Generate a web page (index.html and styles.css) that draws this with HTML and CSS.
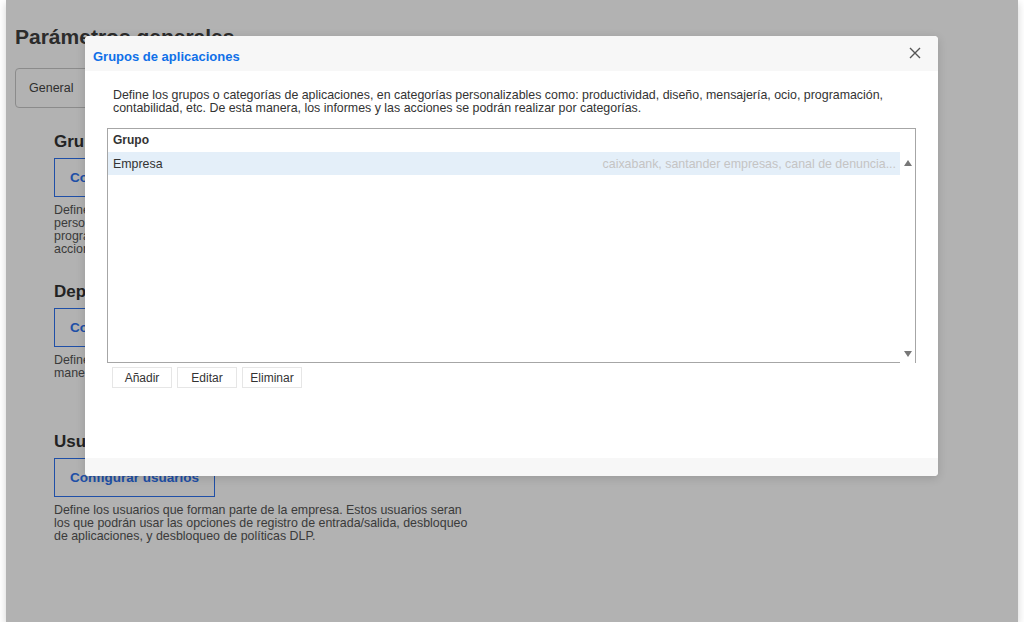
FILE: index.html
```html
<!DOCTYPE html>
<html lang="es">
<head>
    <meta charset="UTF-8">
    <meta name="viewport" content="width=device-width, initial-scale=1.0">
    <title>Parámetros generales</title>
    <link rel="stylesheet" href="styles.css">
</head>
<body>
    <div class="window">
        <div class="page">
            <h1>Parámetros generales</h1>

            <div class="tabs">
                <div class="tab">General</div>
            </div>

            <div class="sections">
                <div class="section">
                    <h2>Grupos de aplicaciones</h2>
                    <button class="config-btn">Configurar grupos de aplicaciones</button>
                    <p class="desc">Define los grupos o categorías de aplicaciones, en categorías personalizables como: productividad, diseño, mensajería, ocio, programación, contabilidad, etc. De esta manera, los informes y las acciones se podrán realizar por categorías.</p>
                </div>

                <div class="section">
                    <h2>Departamentos</h2>
                    <button class="config-btn">Configurar departamentos</button>
                    <p class="desc">Define los departamentos que forman parte de la organización. De esta<br>manera, los informes y las acciones se podrán realizar por departamentos.</p>
                </div>

                <div class="section">
                    <h2>Usuarios</h2>
                    <button class="config-btn">Configurar usuarios</button>
                    <p class="desc">Define los usuarios que forman parte de la empresa. Estos usuarios seran los que podrán usar las opciones de registro de entrada/salida, desbloqueo de aplicaciones, y desbloqueo de políticas DLP.</p>
                </div>
            </div>
        </div>

        <div class="overlay"></div>

        <div class="modal">
            <div class="modal-header">
                <span class="modal-title">Grupos de aplicaciones</span>
                <button class="close" title="Cerrar">
                    <svg width="12" height="12" viewBox="0 0 12 12">
                        <path d="M1 1 L11 11 M11 1 L1 11" stroke="#555" stroke-width="1.4" fill="none"/>
                    </svg>
                </button>
            </div>

            <div class="modal-body">
                <p class="intro">Define los grupos o categorías de aplicaciones, en categorías personalizables como: productividad, diseño, mensajería, ocio, programación,<br>contabilidad, etc. De esta manera, los informes y las acciones se podrán realizar por categorías.</p>

                <div class="list">
                    <div class="list-main">
                        <div class="list-head">Grupo</div>
                        <div class="list-row selected">
                            <span class="name">Empresa</span>
                            <span class="apps">caixabank, santander empresas, canal de denuncia...</span>
                        </div>
                    </div>
                    <div class="scroll">
                        <span class="arrow up"></span>
                        <span class="arrow down"></span>
                    </div>
                </div>

                <div class="actions">
                    <button class="small-btn">Añadir</button>
                    <button class="small-btn">Editar</button>
                    <button class="small-btn">Eliminar</button>
                </div>
            </div>

            <div class="modal-footer"></div>
        </div>
    </div>
</body>
</html>
```

FILE: styles.css
```css
body {
    margin: 0;
    background-color: #fff;
    font-family: "Liberation Sans", Arial, sans-serif;
    color: #555;
}
.window {
    position: relative;
    margin: 0 6px;
    width: 1012px;
    height: 622px;
    overflow: hidden;
    background-color: #fff;
    box-shadow: 0 3px 8px rgba(0, 0, 0, 0.18);
}
.page {
    padding: 24px 9px;
}
h1 {
    margin: 0;
    font-size: 21px;
    line-height: 26px;
    color: #404040;
}
.tabs {
    margin-top: 18px;
    display: flex;
}
.tab {
    width: 120px;
    height: 38px;
    line-height: 38px;
    padding-left: 13px;
    border: 1px solid #c8c8c8;
    border-radius: 4px;
    font-size: 12.5px;
    color: #444;
}
.sections {
    margin-top: 23px;
    padding-left: 39px;
}
.section {
    height: 150px;
}
.section h2 {
    margin: 0;
    font-size: 17px;
    line-height: 22px;
    color: #333;
}
.config-btn {
    display: block;
    margin-top: 5px;
    height: 39px;
    padding: 0 15px;
    background: #fff;
    border: 1.5px solid #2d72f0;
    font-family: inherit;
    font-size: 13.5px;
    font-weight: bold;
    color: #2d72f0;
    cursor: pointer;
}
.desc {
    margin: 7px 0 0;
    width: 420px;
    font-size: 12.4px;
    line-height: 13px;
    color: #555;
}
.overlay {
    position: absolute;
    inset: 0;
    background-color: rgba(0, 0, 0, 0.3);
}
.modal {
    position: absolute;
    left: 79px;
    top: 36px;
    width: 853px;
    height: 440px;
    display: flex;
    flex-direction: column;
    background-color: #fff;
    border-radius: 4px;
    overflow: hidden;
    box-shadow: 0 2px 10px rgba(0, 0, 0, 0.15);
}
.modal-header {
    height: 35px;
    display: flex;
    align-items: center;
    justify-content: space-between;
    padding: 6px 17px 0 8px;
    box-sizing: border-box;
    background-color: #f7f7f7;
}
.modal-title {
    font-size: 13px;
    font-weight: bold;
    color: #1070e8;
}
.close {
    margin-top: -8px;
    padding: 0;
    border: none;
    background: none;
    line-height: 0;
    cursor: pointer;
}
.modal-body {
    flex: 1;
    padding: 18px 22px 0;
}
.intro {
    margin: 0 0 0 6px;
    font-size: 12.4px;
    line-height: 13px;
    color: #333;
}
.list {
    margin-top: 13px;
    height: 234px;
    display: flex;
    border: 1px solid #a6a6a6;
    border-bottom: none;
}
.list-main {
    flex: 1;
    border-bottom: 1px solid #a6a6a6;
}
.list-head {
    height: 23px;
    line-height: 23px;
    padding-left: 5px;
    font-size: 12px;
    font-weight: bold;
    color: #333;
}
.list-row {
    height: 23px;
    display: flex;
    justify-content: space-between;
    align-items: center;
    padding: 0 4px 0 5px;
    font-size: 12.4px;
}
.list-row.selected {
    background-color: #e4eff9;
}
.list-row .name {
    color: #333;
}
.list-row .apps {
    color: #c4c4c4;
}
.scroll {
    width: 15px;
    display: flex;
    flex-direction: column;
    justify-content: space-between;
    align-items: center;
    padding: 31px 0 6px;
}
.arrow {
    width: 0;
    height: 0;
    border-left: 4px solid transparent;
    border-right: 4px solid transparent;
}
.arrow.up {
    border-bottom: 6px solid #777;
}
.arrow.down {
    border-top: 6px solid #777;
}
.actions {
    display: flex;
    gap: 5px;
    margin: 4px 0 0 5px;
}
.small-btn {
    width: 60px;
    height: 21px;
    padding: 0;
    background: #fff;
    border: 1px solid #e6e6e6;
    font-family: inherit;
    font-size: 12px;
    color: #333;
    cursor: pointer;
}
.modal-footer {
    height: 18px;
    background-color: #f7f7f7;
}
```
